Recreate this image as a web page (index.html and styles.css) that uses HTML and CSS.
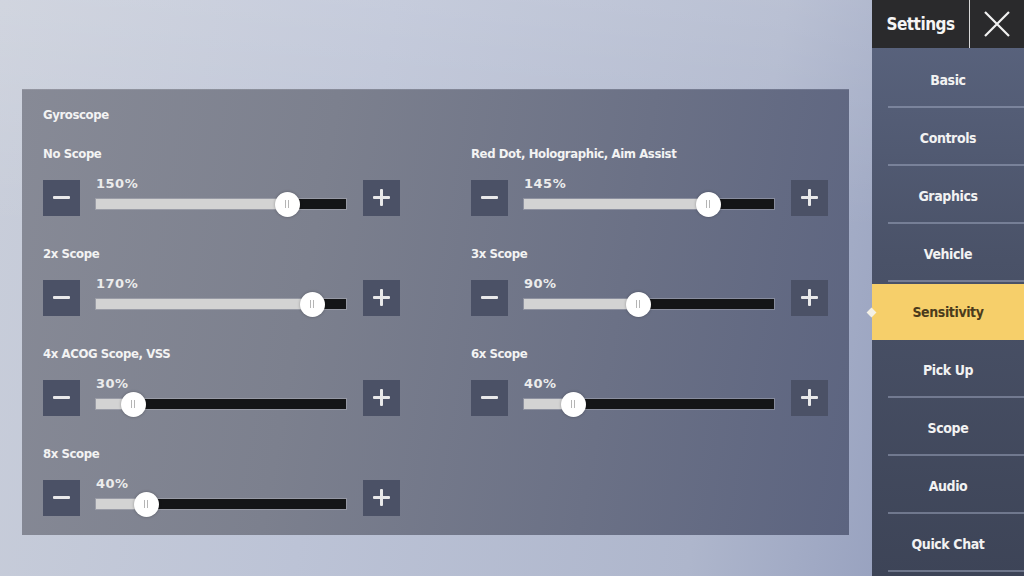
FILE: index.html
```html
<!DOCTYPE html>
<html lang="en">
<head>
    <meta charset="UTF-8">
    <meta name="viewport" content="width=device-width, initial-scale=1.0">
    <title>Settings - Sensitivity</title>
    <link rel="stylesheet" href="styles.css">
</head>
<body>
    <div class="main-area">
        <div class="sens-panel">
            <div class="panel-title">Gyroscope</div>
            <div class="sens-grid">
                <div class="sens-row">
                    <div class="sens-label">No Scope</div>
                    <div class="sens-control">
                        <button class="step-btn minus"><span></span></button>
                        <div class="slider">
                            <div class="slider-value">150%</div>
                            <div class="track"><div class="fill" style="width: 76.4%"></div><div class="thumb" style="left: 76.4%"></div></div>
                        </div>
                        <button class="step-btn plus"><span></span></button>
                    </div>
                </div>
                <div class="sens-row">
                    <div class="sens-label">Red Dot, Holographic, Aim Assist</div>
                    <div class="sens-control">
                        <button class="step-btn minus"><span></span></button>
                        <div class="slider">
                            <div class="slider-value">145%</div>
                            <div class="track"><div class="fill" style="width: 73.5%"></div><div class="thumb" style="left: 73.5%"></div></div>
                        </div>
                        <button class="step-btn plus"><span></span></button>
                    </div>
                </div>
                <div class="sens-row">
                    <div class="sens-label">2x Scope</div>
                    <div class="sens-control">
                        <button class="step-btn minus"><span></span></button>
                        <div class="slider">
                            <div class="slider-value">170%</div>
                            <div class="track"><div class="fill" style="width: 86.4%"></div><div class="thumb" style="left: 86.4%"></div></div>
                        </div>
                        <button class="step-btn plus"><span></span></button>
                    </div>
                </div>
                <div class="sens-row">
                    <div class="sens-label">3x Scope</div>
                    <div class="sens-control">
                        <button class="step-btn minus"><span></span></button>
                        <div class="slider">
                            <div class="slider-value">90%</div>
                            <div class="track"><div class="fill" style="width: 45.4%"></div><div class="thumb" style="left: 45.4%"></div></div>
                        </div>
                        <button class="step-btn plus"><span></span></button>
                    </div>
                </div>
                <div class="sens-row">
                    <div class="sens-label">4x ACOG Scope, VSS</div>
                    <div class="sens-control">
                        <button class="step-btn minus"><span></span></button>
                        <div class="slider">
                            <div class="slider-value">30%</div>
                            <div class="track"><div class="fill" style="width: 14.8%"></div><div class="thumb" style="left: 14.8%"></div></div>
                        </div>
                        <button class="step-btn plus"><span></span></button>
                    </div>
                </div>
                <div class="sens-row">
                    <div class="sens-label">6x Scope</div>
                    <div class="sens-control">
                        <button class="step-btn minus"><span></span></button>
                        <div class="slider">
                            <div class="slider-value">40%</div>
                            <div class="track"><div class="fill" style="width: 19.7%"></div><div class="thumb" style="left: 19.7%"></div></div>
                        </div>
                        <button class="step-btn plus"><span></span></button>
                    </div>
                </div>
                <div class="sens-row">
                    <div class="sens-label">8x Scope</div>
                    <div class="sens-control">
                        <button class="step-btn minus"><span></span></button>
                        <div class="slider">
                            <div class="slider-value">40%</div>
                            <div class="track"><div class="fill" style="width: 20%"></div><div class="thumb" style="left: 20%"></div></div>
                        </div>
                        <button class="step-btn plus"><span></span></button>
                    </div>
                </div>
            </div>
        </div>
    </div>

    <div class="sidebar">
        <div class="sidebar-head">
            <div class="head-title">Settings</div>
            <div class="head-close">
                <svg width="30" height="30" viewBox="0 0 30 30"><path d="M3 3 L27 27 M27 3 L3 27" stroke="#f2f2f2" stroke-width="2.2" fill="none"/></svg>
            </div>
        </div>
        <ul class="menu">
            <li>Basic</li>
            <li>Controls</li>
            <li>Graphics</li>
            <li>Vehicle</li>
            <li class="active">Sensitivity</li>
            <li>Pick Up</li>
            <li>Scope</li>
            <li>Audio</li>
            <li>Quick Chat</li>
        </ul>
    </div>
</body>
</html>
```

FILE: styles.css
```css
html, body {
    height: 100%;
}
body {
    margin: 0;
    display: flex;
    overflow: hidden;
    font-family: "DejaVu Sans Condensed", "DejaVu Sans", sans-serif;
    font-stretch: condensed;
    font-weight: bold;
    color: #f3f3f3;
    background:
        linear-gradient(180deg, rgba(255,255,255,0.15) 0%, rgba(255,255,255,0) 40%),
        linear-gradient(100deg, #c9ceda 0%, #bcc3d6 35%, #aeb6cc 70%, #8893b6 100%);
}
.main-area {
    flex: 1;
    padding: 89px 23px 0 22px;
}
.sens-panel {
    height: 446px;
    box-sizing: border-box;
    padding: 15px 21px 0 21px;
    background: linear-gradient(100deg, #878a96 0%, #7c808e 35%, #6b7186 70%, #5c6480 100%);
    border-top: 1px solid rgba(255,255,255,0.12);
}
.panel-title {
    font-size: 13px;
    letter-spacing: -0.4px;
    height: 20px;
    line-height: 20px;
    margin-bottom: 19px;
}
.sens-grid {
    display: grid;
    grid-template-columns: 357px 357px;
    column-gap: 71px;
    row-gap: 27px;
}
.sens-label {
    font-size: 13px;
    letter-spacing: -0.4px;
    height: 20px;
    line-height: 20px;
    margin-bottom: 16px;
    white-space: nowrap;
}
.sens-control {
    display: flex;
    align-items: flex-start;
    height: 37px;
}
.step-btn {
    width: 37px;
    height: 36px;
    border: none;
    padding: 0;
    background: #4b5166;
    position: relative;
    flex: none;
}
.step-btn span {
    position: absolute;
    left: 10px;
    top: 16px;
    width: 17px;
    height: 3px;
    background: #e9e9ea;
    border-radius: 1px;
}
.step-btn.plus span::after {
    content: "";
    position: absolute;
    left: 7px;
    top: -7px;
    width: 3px;
    height: 17px;
    background: #e9e9ea;
    border-radius: 1px;
}
.slider {
    width: 250px;
    margin: 0 17px 0 16px;
    flex: none;
}
.slider-value {
    font-family: "DejaVu Sans", sans-serif;
    font-stretch: normal;
    font-size: 13px;
    letter-spacing: 0.5px;
    height: 16px;
    line-height: 16px;
    margin-top: -4px;
    color: #ececec;
}
.track {
    position: relative;
    height: 10px;
    margin-top: 7px;
    background: #141517;
    box-shadow: 0 0 0 1px rgba(200,200,205,0.35);
}
.fill {
    height: 100%;
    background: #d3d3d3;
}
.thumb {
    position: absolute;
    top: 50%;
    width: 25px;
    height: 25px;
    margin: -12px 0 0 -12px;
    border-radius: 50%;
    background: #ffffff;
    box-shadow: 0 0 3px rgba(0,0,0,0.3);
}
.thumb::before,
.thumb::after {
    content: "";
    position: absolute;
    top: 8px;
    width: 1px;
    height: 8px;
    background: #b5b5b5;
}
.thumb::before {
    left: 10px;
}
.thumb::after {
    left: 13px;
}
.sidebar {
    width: 152px;
    flex: none;
    background: linear-gradient(180deg, #5b6580 0%, #4a5268 45%, #3d4457 100%);
}
.sidebar-head {
    display: flex;
    height: 48px;
    background: #2a2a2c;
}
.head-title {
    width: 97px;
    border-right: 1px solid #d8d8d8;
    text-align: center;
    line-height: 48px;
    font-size: 17px;
    letter-spacing: -0.5px;
    color: #f5f5f5;
}
.head-close {
    flex: 1;
    display: flex;
    align-items: center;
    justify-content: center;
}
.menu {
    list-style: none;
    margin: 0;
    padding: 0;
}
.menu li {
    position: relative;
    height: 58px;
    line-height: 60px;
    text-align: center;
    font-size: 14px;
    letter-spacing: -0.4px;
    color: #f2f2f2;
}
.menu li:first-child {
    height: 60px;
    line-height: 64px;
}
.menu li::after {
    content: "";
    position: absolute;
    left: 16px;
    right: 0;
    bottom: 0;
    height: 2px;
    background: rgba(170,180,205,0.45);
}
.menu li.active {
    background: #f6cf6a;
    color: #4b3b1c;
    margin-top: 2px;
    height: 56px;
    line-height: 57px;
}
.menu li.active::after {
    display: none;
}
.menu li.active::before {
    content: "";
    position: absolute;
    left: -4px;
    top: 25px;
    width: 7px;
    height: 7px;
    background: #f4f1e6;
    transform: rotate(45deg);
}
```
